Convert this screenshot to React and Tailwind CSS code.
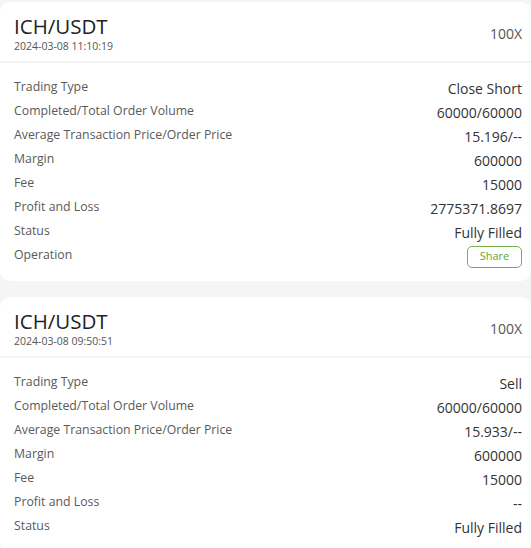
import React from 'react';

const orders = [
  {
    pair: 'ICH/USDT',
    time: '2024-03-08 11:10:19',
    leverage: '100X',
    rows: [
      ['Trading Type', 'Close Short'],
      ['Completed/Total Order Volume', '60000/60000'],
      ['Average Transaction Price/Order Price', '15.196/--'],
      ['Margin', '600000'],
      ['Fee', '15000'],
      ['Profit and Loss', '2775371.8697'],
      ['Status', 'Fully Filled'],
    ],
    share: true,
  },
  {
    pair: 'ICH/USDT',
    time: '2024-03-08 09:50:51',
    leverage: '100X',
    rows: [
      ['Trading Type', 'Sell'],
      ['Completed/Total Order Volume', '60000/60000'],
      ['Average Transaction Price/Order Price', '15.933/--'],
      ['Margin', '600000'],
      ['Fee', '15000'],
      ['Profit and Loss', '--'],
      ['Status', 'Fully Filled'],
    ],
    share: false,
  },
];

function OrderCard({ order }) {
  return (
    <div className="bg-white rounded-[10px]">
      {/* Header */}
      <div className="flex items-center justify-between h-[61px] pl-[14px] pr-[9px] border-b-2 border-[#f4f4f4]">
        <div className="flex flex-col">
          <span className="text-[20.5px] leading-[28px] text-[#222]">{order.pair}</span>
          <span className="text-[10.5px] leading-[12px] text-[#555]">{order.time}</span>
        </div>
        <span className="text-[14px] text-[#555] mt-[3px]">{order.leverage}</span>
      </div>

      {/* Rows */}
      <div className="pl-[14px] pr-[9px] pt-[12px] pb-[14px]">
        {order.rows.map(([label, value]) => (
          <div key={label} className="flex items-center justify-between h-[24px]">
            <span className="text-[12.3px] text-[#5a5a5a]">{label}</span>
            <span className="text-[14px] text-[#333] mt-[2px]">{value}</span>
          </div>
        ))}
        {order.share && (
          <div className="flex items-center justify-between h-[24px]">
            <span className="text-[12.3px] text-[#5a5a5a]">Operation</span>
            <button className="h-[22px] w-[55px] mt-[3px] border border-[#76b24c] rounded-[5px] text-[11px] text-[#5ea630] flex items-center justify-center">
              Share
            </button>
          </div>
        )}
      </div>
    </div>
  );
}

export default function App() {
  return (
    <div
      className="min-h-screen bg-[#f5f5f5] pt-[2px] flex flex-col gap-[16px]"
      style={{ fontFamily: '"Open Sans", "Noto Sans", sans-serif' }}
    >
      {orders.map((o, i) => (
        <OrderCard key={i} order={o} />
      ))}
    </div>
  );
}
